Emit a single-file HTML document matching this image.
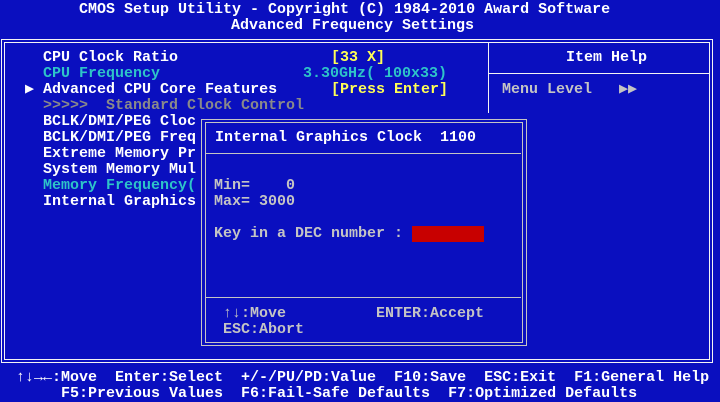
<!DOCTYPE html>
<html><head><meta charset="utf-8"><style>
html,body{margin:0;padding:0;}
body{width:720px;height:400px;background:#0a0fbf;position:relative;overflow:hidden;font-family:"Liberation Mono","DejaVu Sans Mono",monospace;font-weight:bold;font-size:15px;}
.t{position:absolute;white-space:pre;line-height:16px;height:16px;margin-top:1px;}
.w{color:#ffffff}.c{color:#2ec4c8}.y{color:#ffff55}.g{color:#8a8a8a}.l{color:#c4c4c4}
.h{position:absolute;height:1px;}
.v{position:absolute;width:1px;}
.wl{background:#f4f4f4}.gl{background:#c4c4c4}
</style></head><body>
<div class="t w" style="left:79px;top:1px">CMOS Setup Utility - Copyright (C) 1984-2010 Award Software</div>
<div class="t w" style="left:231px;top:17px">Advanced Frequency Settings</div>

<div class="h wl" style="left:1px;top:39px;width:712px"></div>
<div class="h wl" style="left:4px;top:42px;width:706px"></div>
<div class="h wl" style="left:1px;top:362px;width:712px"></div>
<div class="h wl" style="left:4px;top:359px;width:706px"></div>
<div class="v wl" style="left:1px;top:39px;height:324px"></div>
<div class="v wl" style="left:4px;top:42px;height:318px"></div>
<div class="v wl" style="left:712px;top:39px;height:324px"></div>
<div class="v wl" style="left:709px;top:42px;height:318px"></div>
<div class="v wl" style="left:488px;top:42px;height:71px"></div>
<div class="h wl" style="left:488px;top:73px;width:221px"></div>

<div class="t w" style="left:43px;top:49px">CPU Clock Ratio</div>
<div class="t y" style="left:331px;top:49px">[33 X]</div>
<div class="t c" style="left:43px;top:65px">CPU Frequency</div>
<div class="t c" style="left:303px;top:65px">3.30GHz( 100x33)</div>
<div class="t w" style="left:25px;top:81px">▶ Advanced CPU Core Features</div>
<div class="t y" style="left:331px;top:81px">[Press Enter]</div>
<div class="t g" style="left:43px;top:97px">&gt;&gt;&gt;&gt;&gt;  Standard Clock Control</div>
<div class="t w" style="left:43px;top:113px">BCLK/DMI/PEG Cloc</div>
<div class="t w" style="left:43px;top:129px">BCLK/DMI/PEG Freq</div>
<div class="t w" style="left:43px;top:145px">Extreme Memory Pr</div>
<div class="t w" style="left:43px;top:161px">System Memory Mul</div>
<div class="t c" style="left:43px;top:177px">Memory Frequency(</div>
<div class="t w" style="left:43px;top:193px">Internal Graphics</div>

<div class="t w" style="left:566px;top:49px">Item Help</div>
<div class="t l" style="left:502px;top:81px">Menu Level   ▶▶</div>

<div style="position:absolute;left:201px;top:119px;width:326px;height:227px;background:#0a0fbf"></div>
<div class="h gl" style="left:201px;top:119px;width:326px"></div>
<div class="h gl" style="left:205px;top:122px;width:318px"></div>
<div class="h gl" style="left:201px;top:345px;width:326px"></div>
<div class="h gl" style="left:205px;top:342px;width:318px"></div>
<div class="v gl" style="left:201px;top:119px;height:227px"></div>
<div class="v gl" style="left:205px;top:122px;height:221px"></div>
<div class="v gl" style="left:526px;top:119px;height:227px"></div>
<div class="v gl" style="left:522px;top:122px;height:221px"></div>
<div class="h gl" style="left:205px;top:153px;width:316px"></div>
<div class="h gl" style="left:205px;top:297px;width:316px"></div>
<div class="t w" style="left:215px;top:129px">Internal Graphics Clock  1100</div>
<div class="t l" style="left:214px;top:177px">Min=    0</div>
<div class="t l" style="left:214px;top:193px">Max= 3000</div>
<div class="t l" style="left:214px;top:225px">Key in a DEC number :</div>
<div style="position:absolute;left:412px;top:226px;width:72px;height:16px;background:#c80000"></div>
<div class="t l" style="left:223px;top:305px">↑↓:Move</div>
<div class="t l" style="left:376px;top:305px">ENTER:Accept</div>
<div class="t l" style="left:223px;top:321px">ESC:Abort</div>

<div class="t w" style="left:16px;top:369px">↑↓→←:Move  Enter:Select  +/-/PU/PD:Value  F10:Save  ESC:Exit  F1:General Help</div>
<div class="t w" style="left:61px;top:385px">F5:Previous Values  F6:Fail-Safe Defaults  F7:Optimized Defaults</div>
</body></html>
